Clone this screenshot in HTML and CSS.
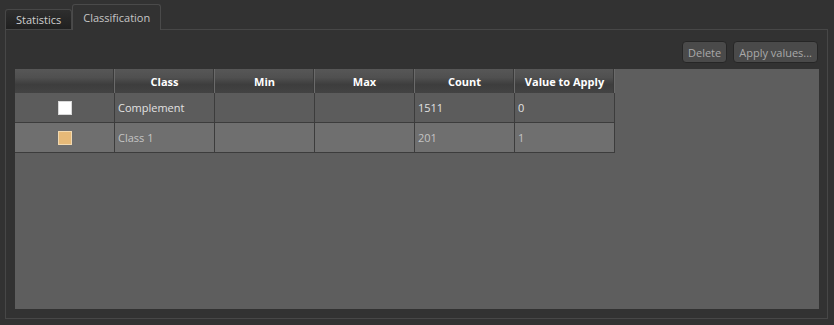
FILE: index.html
```html
<!DOCTYPE html>
<html>
<head>
    <title>Classification</title>
    <link rel="stylesheet" href="styles.css">
</head>
<body>
    <div class="tabs">
        <div class="tab">Statistics</div>
        <div class="tab active">Classification</div>
    </div>
    <div class="panel">
        <div class="toolbar">
            <button>Delete</button>
            <button>Apply values...</button>
        </div>
        <div class="grid">
            <div class="row head">
                <div class="cell"></div>
                <div class="cell">Class</div>
                <div class="cell">Min</div>
                <div class="cell">Max</div>
                <div class="cell">Count</div>
                <div class="cell">Value to Apply</div>
            </div>
            <div class="row">
                <div class="cell swatch-cell"><span class="swatch white"></span></div>
                <div class="cell">Complement</div>
                <div class="cell"></div>
                <div class="cell"></div>
                <div class="cell">1511</div>
                <div class="cell">0</div>
            </div>
            <div class="row alt">
                <div class="cell swatch-cell"><span class="swatch tan"></span></div>
                <div class="cell">Class 1</div>
                <div class="cell"></div>
                <div class="cell"></div>
                <div class="cell">201</div>
                <div class="cell">1</div>
            </div>
        </div>
    </div>
</body>
</html>
```
FILE: styles.css
```css
html, body {
    margin: 0;
    height: 100%;
    background: #323232;
    font-family: "Open Sans", "Noto Sans", sans-serif;
    font-size: 11px;
}

body {
    padding: 5px 6px 6px 5px;
    box-sizing: border-box;
    display: flex;
    flex-direction: column;
}

.tabs {
    display: flex;
    align-items: flex-end;
    height: 25px;
    margin-bottom: -1px;
}

.tab {
    height: 20px;
    line-height: 20px;
    padding: 0 10px;
    color: #cfcfcf;
    border: 1px solid #474747;
    border-bottom: none;
    border-radius: 3px 3px 0 0;
    background: linear-gradient(#2e2e2e, #1f1f1f);
}

.tab.active {
    height: 25px;
    line-height: 25px;
    padding: 0 10px;
    background: #323232;
    color: #c6c6c6;
    border-color: #4a4a4a;
    position: relative;
    z-index: 1;
}

.panel {
    flex: 1;
    border: 1px solid #474747;
    padding: 0 8px 9px 9px;
    display: flex;
    flex-direction: column;
}

.toolbar {
    display: flex;
    justify-content: flex-end;
    gap: 6px;
    padding: 11px 1px 6px 0;
}

button {
    appearance: none;
    -webkit-appearance: none;
    height: 22px;
    padding: 0 5px;
    font-family: inherit;
    font-size: 11px;
    color: #a9a9a9;
    background: #4a4a4a;
    border: 1px solid #262626;
    border-radius: 4px;
}

.grid {
    flex: 1;
    background: #5e5e5e;
}

.row {
    display: flex;
    height: 30px;
}

.row.head {
    height: 24px;
}

.cell {
    width: 96px;
    padding-left: 3px;
    border-right: 1px solid #3c3c3c;
    border-bottom: 1px solid #3c3c3c;
    display: flex;
    align-items: center;
    background: #5c5c5c;
    color: #e2e2e2;
}

.row.alt .cell {
    background: #6f6f6f;
    color: #c4c4c4;
}

.head .cell {
    justify-content: center;
    padding-left: 0;
    width: 99px;
    font-weight: bold;
    color: #ffffff;
    border-right: 1px solid #6a6a6a;
    border-bottom: none;
    background: linear-gradient(#575757 0%, #505050 35%, #3d3d3d 65%, #434343 100%);
    box-shadow: inset -1px 0 0 #3a3a3a;
}

.swatch-cell {
    justify-content: center;
    padding-left: 0;
    width: 99px;
}

.swatch {
    width: 12px;
    height: 12px;
    border: 1px solid #d8d8d8;
}

.swatch.white {
    background: #ffffff;
}

.swatch.tan {
    background: #e6b978;
    border-color: #f2d9b0;
}
```
